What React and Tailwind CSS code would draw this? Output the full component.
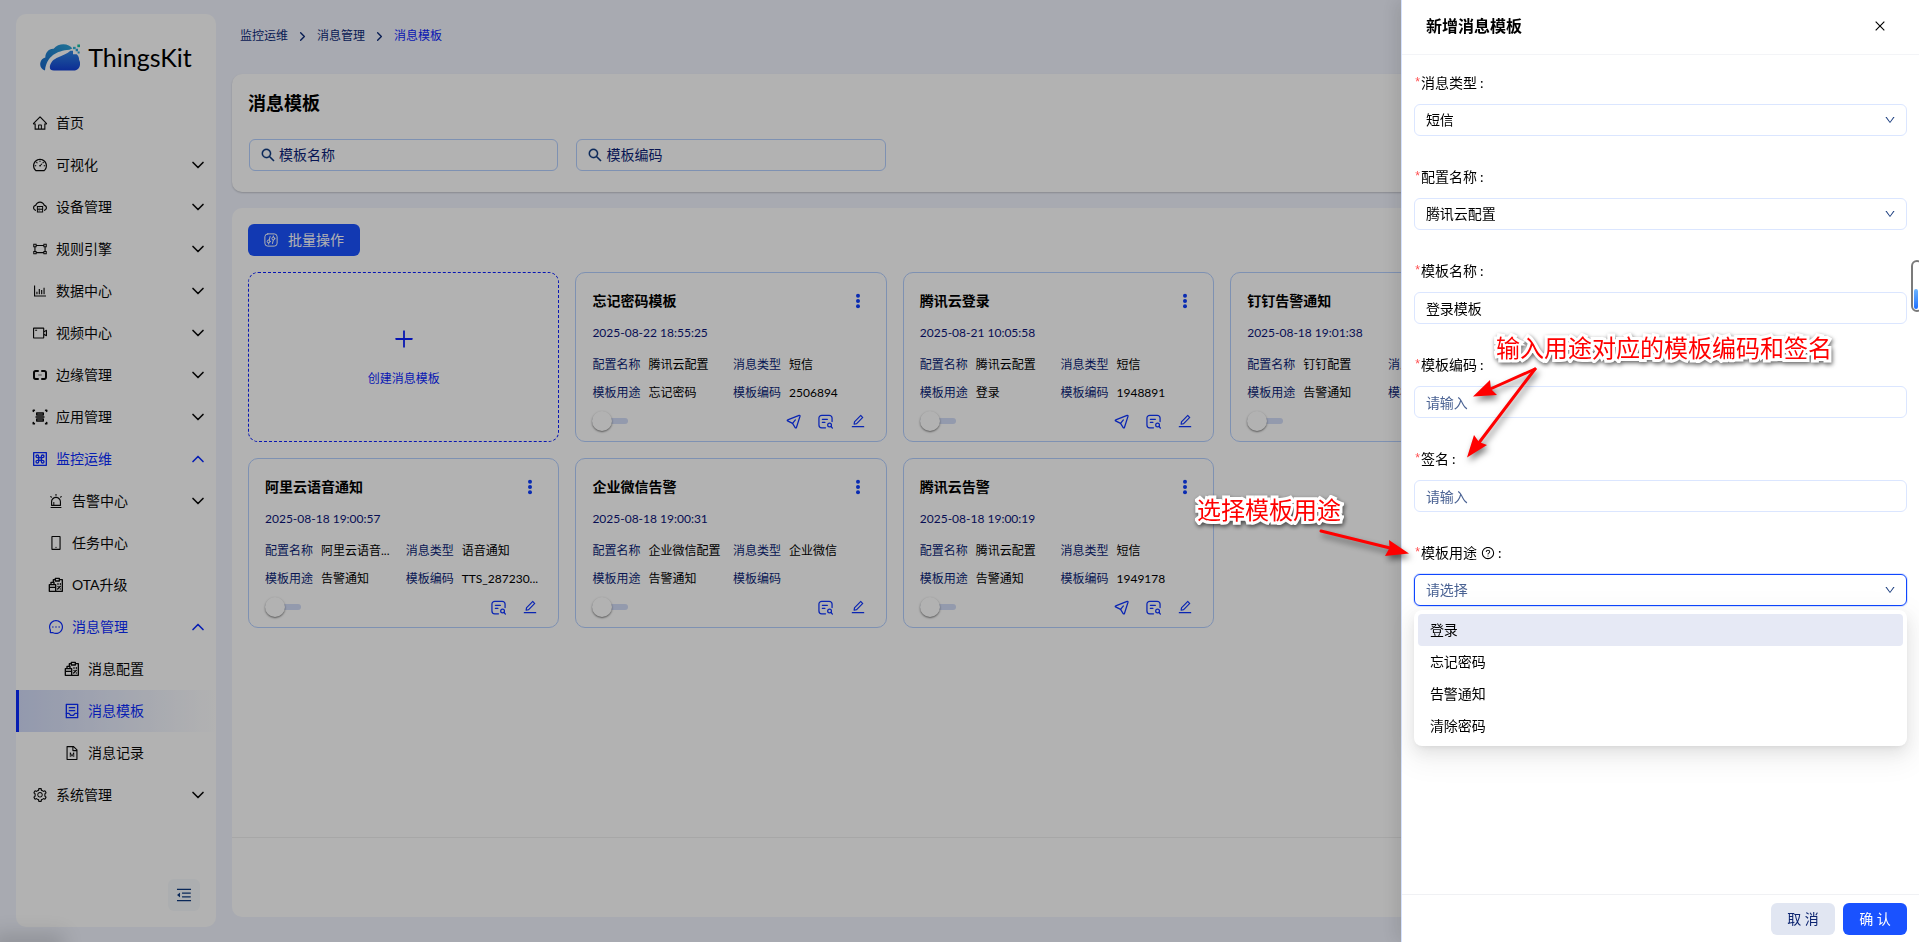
import React, { useState } from 'react';
import {
  AiOutlineAlert,
  AiOutlineBarChart,
  AiOutlineClose,
  AiOutlineCloudServer,
  AiOutlineDashboard,
  AiOutlineDown,
  AiOutlineEdit,
  AiOutlineFileMarkdown,
  AiOutlineGateway,
  AiOutlineHome,
  AiOutlineMenuFold,
  AiOutlineMessage,
  AiOutlineMobile,
  AiOutlinePlus,
  AiOutlineQuestionCircle,
  AiOutlineSearch,
  AiOutlineSetting,
  AiOutlineVideoCamera,
} from 'react-icons/ai';
import { ChevronDown, ChevronRight, ChevronUp } from 'lucide-react';
import clsx from 'clsx';

const Svg = ({ className, strokeWidth = 2, children }) => (
  <svg
    viewBox="0 0 24 24"
    fill="none"
    stroke="currentColor"
    strokeWidth={strokeWidth}
    strokeLinecap="round"
    strokeLinejoin="round"
    className={className}
    aria-hidden="true"
  >
    {children}
  </svg>
);

const EdgeIcon = ({ className }) => (
  <Svg className={className} strokeWidth={3}>
    <path d="M9 6H5.500A2.500 2.500 0 0 0 3 8.500v7A2.500 2.500 0 0 0 5.500 18H9M15 6h3.500A2.500 2.500 0 0 1 21 8.500v7a2.500 2.500 0 0 1-2.500 2.500H15" />
    <path d="M10 12h4" strokeWidth={2} opacity={0.4} />
  </Svg>
);

const AppIcon = ({ className }) => (
  <Svg className={className}>
    <path d="M2 3.500V2h1.500M20.500 2H22v1.500M22 20.500V22h-1.500M3.500 22H2v-1.500" strokeWidth={2.500} />
    <path d="M7 6h10v3H7zM7 15h10v3H7zM6 12h12" />
  </Svg>
);

const MonitorIcon = ({ className }) => (
  <Svg className={className}>
    <path d="M2.500 2.500h19v19h-19z" />
    <path d="M10 10H8a2 2 0 1 1 2-2zM14 10h2a2 2 0 1 0-2-2zM10 14H8a2 2 0 1 0 2 2zM14 14h2a2 2 0 1 1-2 2zM10 10h4v4h-4z" />
  </Svg>
);

const PackageIcon = ({ className }) => (
  <Svg className={className}>
    <path d="M8 8V4h3M17 4h4.500v17.500H12M11 2h6v4h-6z" />
    <path d="M2 11.500h9.500v10H2zM4.500 11V8H9v3M2 15.500h9" />
    <path d="M15 10v1M18.500 10v1M14.500 18l4-4M15 14v.1M18.500 18v.1" />
  </Svg>
);

const TemplateIcon = ({ className }) => (
  <Svg className={className}>
    <path d="M3.500 2h17v20h-17z" />
    <path d="M8 7h8M8 11.500h8M3.500 15.500h4l2.500 3h4l2.500-3h4" />
  </Svg>
);

const SendIcon = ({ className }) => (
  <Svg className={className}>
    <path d="M2.700 9.300 21 2.300c.9-.3 1.600.4 1.400 1.300l-5.700 18c-.3.900-1.500 1-2 .2L10.500 15 2.500 11c-.8-.5-.7-1.400.2-1.700Z" />
    <path d="m10.500 15 4.500-5.500" />
  </Svg>
);

const LogIcon = ({ className }) => (
  <Svg className={className}>
    <path d="M12 22H6a4.500 4.500 0 0 1-4.500-4.500v-11A4.500 4.500 0 0 1 6 2h12a4.500 4.500 0 0 1 4.500 4.500V12" />
    <path d="M7 8.500h8M7 13.500h4" />
    <circle cx="18.500" cy="17.500" r="3" />
    <path d="m21 20 2 2.500" />
  </Svg>
);

const MoreIcon = ({ className }) => (
  <svg viewBox="0 0 16 16" fill="currentColor" className={className} aria-hidden="true">
    <circle cx="8" cy="2.700" r="2" />
    <circle cx="8" cy="8" r="2" />
    <circle cx="8" cy="13.300" r="2" />
  </svg>
);

const BatchIcon = ({ className }) => (
  <Svg className={className} strokeWidth={1.7}>
    <rect x="1.500" y="1.500" width="21" height="21" rx="5" />
    <circle cx="8" cy="14.500" r="2.500" />
    <circle cx="16" cy="9.500" r="2.500" />
    <path d="M8 17v2M9 12l1.500-6M16 12l-1.500 6M16 7V5" />
  </Svg>
);

const Logo = () => (
  <div className="flex h-[88px] items-center justify-center gap-2 pb-[2px]">
    <svg viewBox="0 0 120 80" className="h-[27px] w-10" aria-hidden="true">
      <defs>
        <linearGradient id="back" x1="0" y1="1" x2="1" y2="0">
          <stop offset="0" stopColor="#1764c8" />
          <stop offset="1" stopColor="#2fa6d8" />
        </linearGradient>
        <linearGradient id="front" x1="0.600" y1="0" x2="0.600" y2="1">
          <stop offset="0" stopColor="#2f86e0" />
          <stop offset="1" stopColor="#1340d6" />
        </linearGradient>
      </defs>
      <path
        d="M15 79C4 76-1 66 1 56c2-9 7-14 15-16 0-14 10-27 25-26C48 4 60 0 70 0c12 0 22 5 27 13l-9 4C50 20 20 36 15 79Z"
        fill="url(#back)"
      />
      <path
        d="M42 79c-10 0-14-5-12-14 3-12 10-20 25-26 14-6 27-10 36-19h8v10h11c5 5 8 10 7 17 5 8 4 18-1 25-4 5-9 7-16 7Z"
        fill="url(#front)"
      />
      <path d="M112 1h9v8h-9z" fill="#18c1a4" />
      <path d="M99 8h8v7h-8z" fill="#2fb6d8" />
      <path d="M107 14h7v7h-7zM113 22h6v6h-6z" fill="#29a5de" />
    </svg>
    <span className="text-[25px] leading-8 text-black">ThingsKit</span>
  </div>
);

const MENU = [
  { label: '首页', icon: AiOutlineHome, level: 1 },
  { label: '可视化', icon: AiOutlineDashboard, level: 1, arrow: 'down' },
  { label: '设备管理', icon: AiOutlineCloudServer, level: 1, arrow: 'down' },
  { label: '规则引擎', icon: AiOutlineGateway, level: 1, arrow: 'down' },
  { label: '数据中心', icon: AiOutlineBarChart, level: 1, arrow: 'down' },
  { label: '视频中心', icon: AiOutlineVideoCamera, level: 1, arrow: 'down' },
  { label: '边缘管理', icon: EdgeIcon, level: 1, arrow: 'down' },
  { label: '应用管理', icon: AppIcon, level: 1, arrow: 'down' },
  { label: '监控运维', icon: MonitorIcon, level: 1, arrow: 'up' },
  { label: '告警中心', icon: AiOutlineAlert, level: 2, arrow: 'down' },
  { label: '任务中心', icon: AiOutlineMobile, level: 2 },
  { label: 'OTA升级', icon: PackageIcon, level: 2 },
  { label: '消息管理', icon: AiOutlineMessage, level: 2, arrow: 'up' },
  { label: '消息配置', icon: PackageIcon, level: 3 },
  { label: '消息模板', icon: TemplateIcon, level: 3, active: true },
  { label: '消息记录', icon: AiOutlineFileMarkdown, level: 3 },
  { label: '系统管理', icon: AiOutlineSetting, level: 1, arrow: 'down' },
];

const CARDS = [
  { title: '忘记密码模板', time: '2025-08-22 18:55:25', config: '腾讯云配置', type: '短信', usage: '忘记密码', code: '2506894', send: true },
  { title: '腾讯云登录', time: '2025-08-21 10:05:58', config: '腾讯云配置', type: '短信', usage: '登录', code: '1948891', send: true },
  { title: '钉钉告警通知', time: '2025-08-18 19:01:38', config: '钉钉配置', type: '钉钉', usage: '告警通知', code: '' },
  null,
  { title: '阿里云语音通知', time: '2025-08-18 19:00:57', config: '阿里云语音...', type: '语音通知', usage: '告警通知', code: 'TTS_287230...' },
  { title: '企业微信告警', time: '2025-08-18 19:00:31', config: '企业微信配置', type: '企业微信', usage: '告警通知', code: '' },
  { title: '腾讯云告警', time: '2025-08-18 19:00:19', config: '腾讯云配置', type: '短信', usage: '告警通知', code: '1949178', send: true },
];

const USAGES = ['登录', '忘记密码', '告警通知', '清除密码'];

const MenuItem = ({ item }) => {
  const Icon = item.icon;
  const Arrow = item.arrow === 'up' ? ChevronUp : ChevronDown;
  const blue = item.active || item.arrow === 'up';
  return (
    <li>
      <a
        href="#"
        className={clsx(
          'flex h-[42px] items-center gap-2 border-l-[3px] pr-2 text-sm',
          item.level === 1 && 'pl-[13px]',
          item.level === 2 && 'pl-[29px]',
          item.level === 3 && 'pl-[45px]',
          item.active ? 'border-[#0b2bff] bg-linear-to-r from-[#d3dcf9] to-white' : 'border-transparent',
          blue ? 'text-[#0b2bff]' : 'text-[#0a0a0a]'
        )}
      >
        <Icon className="size-4 shrink-0" />
        <span className="flex-1">{item.label}</span>
        {item.arrow && <Arrow className="size-5" strokeWidth={2} />}
      </a>
    </li>
  );
};

const Sidebar = () => (
  <aside className="flex w-[200px] shrink-0 flex-col rounded-[10px] bg-white">
    <Logo />
    <nav className="flex-1">
      <ul>
        {MENU.map((item) => (
          <MenuItem key={item.label} item={item} />
        ))}
      </ul>
    </nav>
    <div className="flex justify-end p-4">
      <button className="flex size-8 items-center justify-center rounded-md bg-[#f7fafc] text-[#0f3a80]" aria-label="收起菜单">
        <AiOutlineMenuFold className="size-[18px]" />
      </button>
    </div>
  </aside>
);

const Field = ({ label, value }) => (
  <div className="flex h-7 items-center gap-2 overflow-hidden whitespace-nowrap text-xs">
    <span className="text-[#0c1f78]">{label}</span>
    <span className="text-black">{value}</span>
  </div>
);

const TemplateCard = ({ card }) => (
  <article className="flex h-[170px] min-w-0 flex-col rounded-[10px] border border-[#b5d0ff] px-4">
    <div className="flex h-[52px] items-center justify-between pt-1">
      <h3 className="text-sm font-bold text-black">{card.title}</h3>
      <button className="flex w-6 justify-center text-[#0f3fff]" aria-label="更多">
        <MoreIcon className="size-4" />
      </button>
    </div>
    <time className="flex h-4 items-center text-xs text-[#0c1478]">{card.time}</time>
    <div className="mt-[10px] grid grid-cols-2 gap-x-1">
      <Field label="配置名称" value={card.config} />
      <Field label="消息类型" value={card.type} />
      <Field label="模板用途" value={card.usage} />
      <Field label="模板编码" value={card.code} />
    </div>
    <div className="flex h-7 items-center justify-between">
      <input
        type="checkbox"
        role="switch"
        aria-label={card.title}
        className="relative h-[6px] w-9 appearance-none rounded-full bg-[#d3ddf8] before:absolute before:-top-[7px] before:left-0 before:size-5 before:rounded-full before:bg-white before:shadow-[0_1px_2px_rgba(0,0,0,0.5)]"
      />
      <div className="flex items-center gap-2 text-[#0f35ff]">
        {card.send && (
          <button className="flex w-6 justify-center" aria-label="发送">
            <SendIcon className="size-[15px]" />
          </button>
        )}
        <button className="flex w-6 justify-center" aria-label="日志">
          <LogIcon className="size-[15px]" />
        </button>
        <button className="flex w-6 justify-center" aria-label="编辑">
          <AiOutlineEdit className="size-4" />
        </button>
      </div>
    </div>
  </article>
);

const SearchInput = ({ placeholder }) => (
  <label className="mx-px flex h-8 items-center gap-[3px] rounded-md border border-[#b5d0ff] px-[10px]">
    <AiOutlineSearch className="size-4 shrink-0 text-[#0f3a80]" stroke="currentColor" strokeWidth={20} />
    <input
      aria-label={placeholder}
      placeholder={placeholder}
      className="w-full min-w-0 bg-transparent text-sm text-black outline-none placeholder:text-[#0c1f78]"
    />
  </label>
);

const Main = () => (
  <main className="flex min-w-0 flex-1 flex-col pr-[34px] pb-[10px]">
    <nav className="flex h-11 items-center gap-[7px] px-2 text-xs text-[#0c2a78]">
      <a href="#">监控运维</a>
      <ChevronRight className="size-[15px]" strokeWidth={2.2} />
      <a href="#">消息管理</a>
      <ChevronRight className="size-[15px]" strokeWidth={2.2} />
      <a href="#" className="text-[#0b1fff]">消息模板</a>
    </nav>

    <section className="mt-4 rounded-[10px] bg-white px-4 pt-[15px] pb-[21px] shadow-[0_1px_2px_rgba(0,0,0,0.2)]">
      <h1 className="text-lg leading-7 font-bold text-black">消息模板</h1>
      <div className="mt-[22px] grid grid-cols-5 gap-4">
        <SearchInput placeholder="模板名称" />
        <SearchInput placeholder="模板编码" />
      </div>
    </section>

    <section className="mt-4 flex flex-1 flex-col rounded-[10px] bg-white">
      <div className="flex-1 p-4">
        <button className="flex h-8 items-center gap-[10px] rounded-md bg-[#1a52ff] px-4 text-sm text-white">
          <BatchIcon className="size-[14px]" />
          批量操作
        </button>
        <div className="mt-4 grid grid-cols-5 gap-4">
          <button className="flex h-[170px] flex-col items-center justify-center gap-5 rounded-[10px] border border-dashed border-[#0b1fff] text-xs text-[#0b1fff]">
            <AiOutlinePlus className="size-6" />
            创建消息模板
          </button>
          {CARDS.map((card, i) => (card ? <TemplateCard key={card.title} card={card} /> : <div key={i} />))}
        </div>
      </div>
      <div className="h-20 border-t border-[#efefef]" />
    </section>
  </main>
);

const FormItem = ({ id, label, help, children }) => (
  <div className="mb-7">
    <div className="mb-2 flex h-[26px] items-center text-sm text-black">
      <span className="font-['Liberation_Mono',monospace] text-xs text-[#ff4d4f]">*</span>
      <label htmlFor={id}>{label}</label>
      {help && <AiOutlineQuestionCircle className="ml-1 size-[14px]" />}
      <span className="ml-[3px]">:</span>
    </div>
    {children}
  </div>
);

const SelectBox = ({ id, options, placeholder, focused }) => (
  <div className="relative">
    <select
      id={id}
      className={clsx(
        'h-8 w-full appearance-none rounded-md border bg-white px-[11px] text-sm outline-none',
        focused ? 'border-[#0f47ff] text-[#4a6293] shadow-[0_0_0_1px_rgba(15,71,255,0.15)]' : 'border-[#dbe6ff] text-black'
      )}
    >
      {placeholder && <option value="">{placeholder}</option>}
      {options.map((o) => (
        <option key={o}>{o}</option>
      ))}
    </select>
    <AiOutlineDown className="pointer-events-none absolute top-[10px] right-[11px] size-3 text-[#1d3f80]" />
  </div>
);

const inputClass =
  'h-8 w-full rounded-md border border-[#dbe6ff] px-[11px] text-sm text-black outline-none placeholder:text-[#4a6293]';

const Drawer = () => {
  const [name, setName] = useState('登录模板');
  return (
    <aside className="fixed inset-y-0 right-0 flex w-[27%] flex-col border-l border-[#d5e2ff] bg-white shadow-[-6px_0_16px_rgba(0,0,0,0.1)]">
      <header className="flex h-[55px] items-center justify-between border-b border-[#f3f4f7] pr-8 pb-[2px] pl-6">
        <h2 className="text-base font-bold text-black">新增消息模板</h2>
        <button aria-label="关闭">
          <AiOutlineClose className="size-[14px]" />
        </button>
      </header>

      <form className="flex-1 px-3 pt-[15px]">
        <FormItem id="type" label="消息类型">
          <SelectBox id="type" options={['短信']} />
        </FormItem>
        <FormItem id="config" label="配置名称">
          <SelectBox id="config" options={['腾讯云配置']} />
        </FormItem>
        <FormItem id="name" label="模板名称">
          <input id="name" className={inputClass} value={name} onChange={(e) => setName(e.target.value)} />
        </FormItem>
        <FormItem id="code" label="模板编码">
          <input id="code" className={inputClass} placeholder="请输入" />
        </FormItem>
        <FormItem id="sign" label="签名">
          <input id="sign" className={inputClass} placeholder="请输入" />
        </FormItem>
        <FormItem id="usage" label="模板用途" help>
          <div className="relative">
            <SelectBox id="usage" options={USAGES} placeholder="请选择" focused />
            <ul
              role="listbox"
              aria-label="模板用途"
              className="absolute top-9 right-0 left-0 rounded-lg bg-white p-1 shadow-[0_6px_16px_0_rgba(0,0,0,0.08),0_3px_6px_-4px_rgba(0,0,0,0.12),0_9px_28px_8px_rgba(0,0,0,0.05)]"
            >
              {USAGES.map((u, i) => (
                <li
                  key={u}
                  role="option"
                  aria-selected={i === 0}
                  className={clsx('flex h-8 items-center rounded px-3 text-sm text-black', i === 0 && 'bg-[#e6e9f5]')}
                >
                  {u}
                </li>
              ))}
            </ul>
          </div>
        </FormItem>
      </form>

      <footer className="flex h-12 items-center justify-end gap-2 border-t border-[#f0f1f4] px-3 text-sm">
        <button className="h-8 w-16 rounded-md bg-[#e1e6f2] text-[#0c2470]">取 消</button>
        <button className="h-8 w-16 rounded-md bg-[#1a52ff] text-white">确 认</button>
      </footer>

      {/* floating scroll gauge */}
      <div className="absolute top-[260px] -right-1 flex h-[52px] w-3 items-end rounded-full border-2 border-[#7b7b7b] bg-white p-px">
        <div className="h-5 w-1 rounded-full bg-linear-to-b from-[#6cb4ff] to-[#1f6fff]" />
      </div>
    </aside>
  );
};

const Note = ({ className, children }) => (
  <span
    className={clsx(
      'absolute text-2xl leading-8 whitespace-nowrap text-[#ff0000] [-webkit-text-stroke:6px_white] [paint-order:stroke_fill] drop-shadow-[1px_2px_2px_rgba(0,0,0,0.6)]',
      className
    )}
  >
    {children}
  </span>
);

// Hand-placed notes and arrows drawn over the whole screen
const Annotations = () => (
  <div className="pointer-events-none fixed top-0 right-0 h-[600px] w-[739px]">
    <svg viewBox="1180 0 739 600" className="h-[600px] w-[739px] drop-shadow-[2px_4px_3px_rgba(0,0,0,0.5)]" aria-hidden="true">
      <g stroke="#ff0000" strokeWidth="3" strokeLinecap="round">
        <path d="M1535 369 1488 390" />
        <path d="M1535 369 1478 444" />
        <path d="M1321 531 1390 548" />
      </g>
      <g fill="#ff0000">
        <path d="M1473 396.500 1490 380 1491 389 1497 395Z" />
        <path d="M1467 457.500 1474 435 1479 442 1487 445Z" />
        <path d="M1409 553.500 1389 540 1389.500 548 1385 556Z" />
      </g>
    </svg>
    <Note className="top-[332px] left-[316px]">输入用途对应的模板编码和签名</Note>
    <Note className="top-[494px] left-[17px]">选择模板用途</Note>
  </div>
);

export default function App() {
  return (
    <div className="font-['Lato','Noto_Sans_CJK_SC',sans-serif]">
      <div className="flex min-h-screen gap-4 bg-[#f1f4fe] pt-[14px] pb-[15px] pl-4">
        <Sidebar />
        <Main />
      </div>
      <div className="fixed inset-0 bg-black/30" />
      <div className="fixed -bottom-2 left-0 h-2 w-14 shadow-[0_0_20px_8px_rgba(0,0,0,0.15)]" />
      <Drawer />
      <Annotations />
    </div>
  );
}
